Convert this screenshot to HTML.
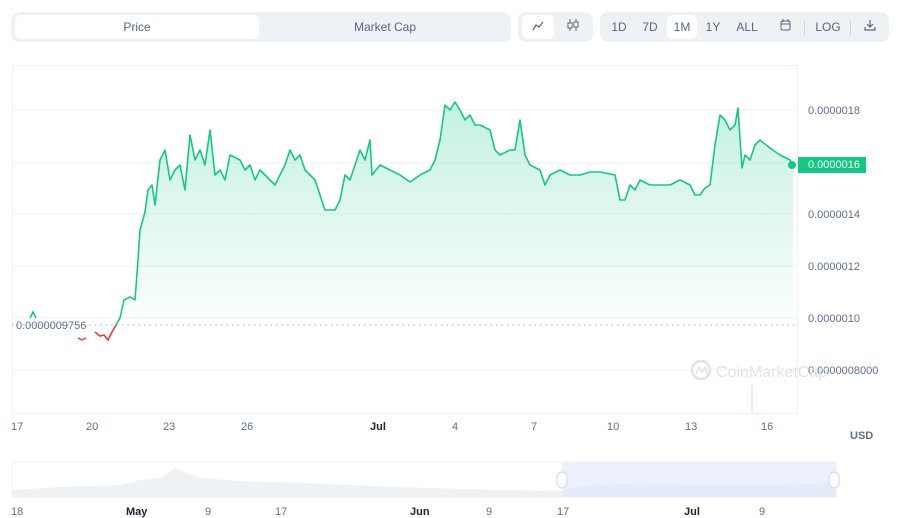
<!DOCTYPE html>
<html><head><meta charset="utf-8"><style>
body{margin:0;width:904px;height:516px;background:#fff;font-family:"Liberation Sans",sans-serif;position:relative;overflow:hidden}
.g{position:absolute;background:#eff2f5;border-radius:8px}
.b{position:absolute;font-size:12px;color:#58667e;text-align:center;line-height:24px}
.w{background:#fff;border-radius:6px}
.t{position:absolute;font-size:11px;color:#616e85}
</style></head><body>
<div class="g" style="left:11px;top:12px;width:500px;height:30px"></div>
<div class="b w" style="left:15px;top:15px;width:244px">Price</div>
<div class="b" style="left:262px;top:15px;width:246px">Market Cap</div>
<div class="g" style="left:518px;top:12px;width:75px;height:30px"></div>
<div class="b w" style="left:522px;top:15px;width:32px"><svg width="12" height="10" viewBox="0 0 12 10"><path d="M1 9L4 4L7 6L11 1" fill="none" stroke="#58667e" stroke-width="1.3"/></svg></div>
<div class="b" style="left:558px;top:15px;width:30px"><svg width="14" height="12" viewBox="0 0 14 12"><path d="M4 0V12M10 0V12" stroke="#58667e"/><rect x="2" y="4" width="4" height="5" fill="#fff" stroke="#58667e"/><rect x="8" y="3" width="4" height="5" fill="#fff" stroke="#58667e"/></svg></div>
<div class="g" style="left:600px;top:12px;width:289px;height:30px"></div>
<div class="b" style="left:607px;top:15px;width:24px">1D</div>
<div class="b" style="left:637px;top:15px;width:26px">7D</div>
<div class="b w" style="left:667px;top:15px;width:30px">1M</div>
<div class="b" style="left:701px;top:15px;width:24px">1Y</div>
<div class="b" style="left:733px;top:15px;width:28px">ALL</div>
<div class="b" style="left:776px;top:15px;width:18px"><svg width="11" height="12" viewBox="0 0 11 12"><rect x="1" y="2" width="9" height="9" rx="1.5" fill="none" stroke="#58667e"/><path d="M3 0V3M8 0V3M1 5H10" stroke="#58667e"/></svg></div>
<div style="position:absolute;left:804px;top:20px;width:1px;height:16px;background:#cfd6e4"></div>
<div class="b" style="left:812px;top:15px;width:32px">LOG</div>
<div style="position:absolute;left:850px;top:20px;width:1px;height:16px;background:#cfd6e4"></div>
<div class="b" style="left:860px;top:15px;width:20px"><svg width="12" height="12" viewBox="0 0 12 12"><path d="M6 1V8M3 5L6 8L9 5M1 8V11H11V8" fill="none" stroke="#58667e" stroke-width="1.2"/></svg></div>

<svg style="position:absolute;left:0;top:0" width="904" height="516">
<defs><linearGradient id="f" x1="0" y1="0" x2="0" y2="1"><stop offset="0" stop-color="#16c784" stop-opacity=".25"/><stop offset="1" stop-color="#16c784" stop-opacity=".02"/></linearGradient></defs>
<rect x="12.5" y="65.5" width="785" height="348" fill="none" stroke="#eff2f5"/>
<g stroke="#eff2f5"><path d="M12 110H797M12 163H797M12 214H797M12 266H797M12 318H797M12 370H797"/></g>
<path d="M12 325H797" stroke="#a6b0c3" stroke-dasharray="1.5 4"/>
<path d="M752 385V413" stroke="#cfd6e4"/>
<polygon fill="url(#f)" points="118,318 120,318 124,300 130,297 135,300 138,260 140,230 145,212 148,190 152,185 155,205 160,160 165,150 170,180 175,170 180,165 185,190 190,135 195,160 200,150 205,165 210,130 215,175 220,170 225,180 230,155 240,160 245,170 250,165 255,180 260,170 265,175 270,180 275,185 280,175 285,165 290,150 295,160 300,155 305,170 310,175 315,180 320,195 325,210 335,210 340,200 345,175 350,180 355,165 360,150 365,160 370,140 372,175 380,165 390,170 400,175 410,182 420,175 430,170 435,160 440,140 445,105 450,110 455,102 460,110 465,120 470,115 475,125 480,125 490,130 495,150 500,155 510,150 515,150 520,120 525,155 530,165 540,170 545,185 550,175 560,170 570,175 580,175 590,172 600,172 615,175 620,200 625,200 630,185 635,190 640,180 650,185 660,185 670,185 680,180 690,185 695,195 700,195 705,188 710,185 715,145 720,115 725,120 730,130 735,125 738,108 742,168 745,155 750,160 755,145 760,140 770,148 780,155 790,160 793,165 793,318"/>
<polyline fill="none" stroke="#16c784" stroke-width="1.6" points="30,318 33,312 36,318"/>
<polyline fill="none" stroke="#ea3943" stroke-width="1.6" points="95,332 100,336 104,335 108,340 112,332 116,325"/>
<polyline fill="none" stroke="#ea3943" stroke-width="1.4" points="78,338 82,340 86,338"/>
<polyline fill="none" stroke="#16c784" stroke-width="1.6" stroke-linejoin="round" points="116,325 120,318 124,300 130,297 135,300 138,260 140,230 145,212 148,190 152,185 155,205 160,160 165,150 170,180 175,170 180,165 185,190 190,135 195,160 200,150 205,165 210,130 215,175 220,170 225,180 230,155 240,160 245,170 250,165 255,180 260,170 265,175 270,180 275,185 280,175 285,165 290,150 295,160 300,155 305,170 310,175 315,180 320,195 325,210 335,210 340,200 345,175 350,180 355,165 360,150 365,160 370,140 372,175 380,165 390,170 400,175 410,182 420,175 430,170 435,160 440,140 445,105 450,110 455,102 460,110 465,120 470,115 475,125 480,125 490,130 495,150 500,155 510,150 515,150 520,120 525,155 530,165 540,170 545,185 550,175 560,170 570,175 580,175 590,172 600,172 615,175 620,200 625,200 630,185 635,190 640,180 650,185 660,185 670,185 680,180 690,185 695,195 700,195 705,188 710,185 715,145 720,115 725,120 730,130 735,125 738,108 742,168 745,155 750,160 755,145 760,140 770,148 780,155 790,160 793,165"/>
<circle cx="792" cy="165" r="4" fill="#16c784"/>
<rect x="798" y="157" width="68" height="16" fill="#16c784"/>
<g font-size="11" fill="#616e85" font-family="Liberation Sans"><text x="808" y="114">0.0000018</text><text x="808" y="218">0.0000014</text><text x="808" y="270">0.0000012</text><text x="808" y="322">0.0000010</text><text x="808" y="374">0.0000008000</text><text x="16" y="329">0.0000009756</text></g>
<text x="808" y="168" font-size="11" fill="#fff">0.0000016</text>
<circle cx="701" cy="370" r="9" fill="none" stroke="#dfe3ea" stroke-width="2.5"/>
<path d="M696 374L699 367L702 372L705 367L707 374" fill="none" stroke="#dfe3ea" stroke-width="1.5"/>
<text x="716" y="377" font-size="16" fill="#dfe3ea">CoinMarketCap</text>
<rect x="12" y="462" width="824" height="35" fill="#fff" stroke="#eff2f5"/>
<path d="M12 497L12 490 60 487 120 485 140 480 160 478 175 468 180 470 185 472 200 478 240 481 300 483 400 487 500 490 560 491 562 491 580 486 620 484 700 485 780 485 836 483 836 497Z" fill="#eff2f5"/>
<rect x="562" y="462" width="274" height="35" fill="#dbe4fc" opacity=".5"/>
<rect x="557" y="472" width="10" height="16" rx="5" fill="#fff" stroke="#cfd6e4"/>
<rect x="829" y="472" width="10" height="16" rx="5" fill="#fff" stroke="#cfd6e4"/>
</svg>
<div class="t" style="left:11px;top:421px">17</div><div class="t" style="left:86px;top:421px">20</div><div class="t" style="left:163px;top:421px">23</div><div class="t" style="left:241px;top:421px">26</div>
<div class="t" style="left:370px;top:421px;color:#222531;font-weight:bold">Jul</div><div class="t" style="left:452px;top:421px">4</div><div class="t" style="left:531px;top:421px">7</div><div class="t" style="left:607px;top:421px">10</div><div class="t" style="left:685px;top:421px">13</div><div class="t" style="left:761px;top:421px">16</div>
<div class="t" style="left:850px;top:430px;font-weight:bold">USD</div>
<div class="t" style="left:11px;top:506px">18</div><div class="t" style="left:126px;top:506px;font-weight:bold;color:#222531">May</div><div class="t" style="left:205px;top:506px">9</div><div class="t" style="left:275px;top:506px">17</div><div class="t" style="left:410px;top:506px;font-weight:bold;color:#222531">Jun</div><div class="t" style="left:486px;top:506px">9</div><div class="t" style="left:557px;top:506px">17</div><div class="t" style="left:684px;top:506px;font-weight:bold;color:#222531">Jul</div><div class="t" style="left:759px;top:506px">9</div>
</body></html>
